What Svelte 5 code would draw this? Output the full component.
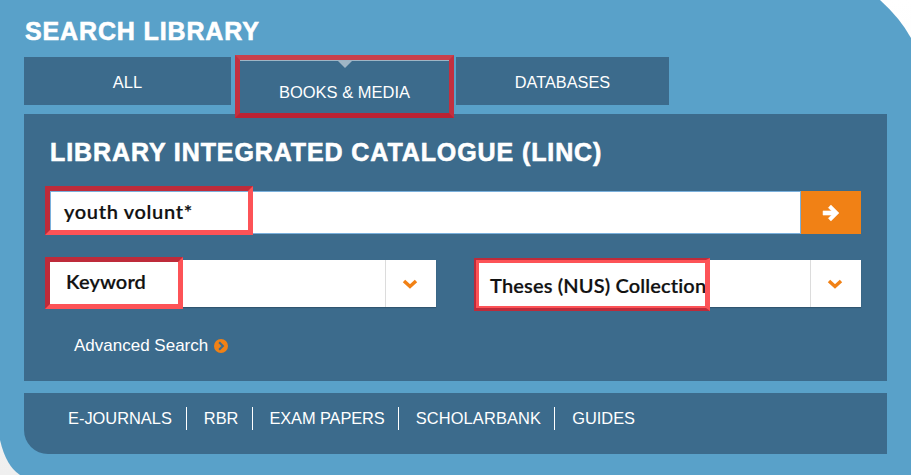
<script>
	const links = ["E-JOURNALS", "RBR", "EXAM PAPERS", "SCHOLARBANK", "GUIDES"];
</script>

<div class="panel">
	<h1>SEARCH LIBRARY</h1>

	<div class="tabs">
		<div class="tab all">ALL</div>
		<div class="tab books">
			<span class="caret"></span>
			BOOKS &amp; MEDIA
			<span class="mark mark-books"></span>
		</div>
		<div class="tab databases">DATABASES</div>
	</div>

	<div class="main">
		<h2>LIBRARY INTEGRATED CATALOGUE (LINC)</h2>

		<div class="search">
			<div class="input">
				youth volunt*
				<span class="mark mark-input"></span>
			</div>
			<div class="go">
				<svg width="18" height="18" viewBox="0 0 17 16">
					<path d="M1 6h8L6 3l2.400-2.600L16 8l-7.600 7.600L6 13l3-3H1z" fill="#fff" stroke="#fff" stroke-width="0.5" stroke-linejoin="round" />
				</svg>
			</div>
		</div>

		<div class="selects">
			<div class="select">
				<span class="value keyword">Keyword</span>
				<span class="arrow">
					<svg width="16" height="10" viewBox="0 0 16 10">
						<path d="M2 2l6 5.500L14 2" fill="none" stroke="#f18115" stroke-width="3.500" />
					</svg>
				</span>
				<span class="mark mark-keyword"></span>
			</div>
			<div class="select">
				<span class="value theses">Theses (NUS) Collection</span>
				<span class="arrow">
					<svg width="16" height="10" viewBox="0 0 16 10">
						<path d="M2 2l6 5.500L14 2" fill="none" stroke="#f18115" stroke-width="3.500" />
					</svg>
				</span>
				<span class="mark mark-theses"></span>
			</div>
		</div>

		<div class="advanced">
			Advanced Search
			<svg width="14" height="14" viewBox="0 0 15 15">
				<circle cx="7.500" cy="7.500" r="7.500" fill="#f18115" />
				<path d="M5.500 3.500l4 4-4 4" fill="none" stroke="#3c6b8c" stroke-width="2.200" />
			</svg>
		</div>
	</div>

	<div class="links">
		{#each links as link}
			<span class="link">{link}</span>
		{/each}
	</div>
</div>

<style>
	:global(body) {
		background: linear-gradient(#ffffff, #efefef);
		height: 475px;
		overflow: hidden;
	}

	.panel {
		box-sizing: border-box;
		width: 911px;
		height: 475px;
		padding: 0 24px;
		background: #59a1c9;
		clip-path: path("M0 0H880Q900 18 911 38V475H20Q6 466 0 440Z");
		font-family: "Liberation Sans", Arial, sans-serif;
		color: #fff;
		overflow: hidden;
	}

	h1 {
		margin: 0;
		padding: 17px 0 0 1px;
		height: 40px;
		box-sizing: content-box;
		font-size: 25px;
		line-height: 28px;
		letter-spacing: 0.860px;
		font-weight: 700;
		-webkit-text-stroke: 0.6px #fff;
	}

	.tabs {
		display: flex;
		height: 48px;
		margin-bottom: 9px;
	}

	.tab {
		position: relative;
		display: flex;
		align-items: center;
		justify-content: center;
		height: 48px;
		background: #3c6b8c;
		font-size: 16.500px;
	}

	.all {
		width: 207px;
		margin-right: 9px;
		padding-top: 2px;
		box-sizing: border-box;
	}

	.books {
		box-sizing: border-box;
		width: 209px;
		height: 55px;
		margin-top: 3px;
		margin-right: 7px;
		padding-top: 9px;
		border-top: 1px solid #9fb5c5;
	}

	.databases {
		width: 213px;
		padding-top: 2px;
		box-sizing: border-box;
		font-size: 16.300px;
	}

	.caret {
		position: absolute;
		top: 0;
		left: 98px;
		width: 0;
		height: 0;
		border-left: 7px solid transparent;
		border-right: 7px solid transparent;
		border-top: 7px solid #9fb5c5;
	}

	.main {
		box-sizing: border-box;
		width: 863px;
		height: 267px;
		padding: 0 26px;
		background: #3c6b8c;
	}

	h2 {
		margin: 0;
		padding-top: 23px;
		height: 54px;
		box-sizing: content-box;
		font-size: 25px;
		line-height: 30px;
		letter-spacing: 0.900px;
		font-weight: 700;
		-webkit-text-stroke: 0.6px #fff;
	}

	.search {
		display: flex;
		height: 43px;
		margin-bottom: 26px;
	}

	.input {
		position: relative;
		flex: 1;
		box-sizing: border-box;
		padding-left: 13px;
		background: #fff;
		border: 1px solid #7ab0dc;
		color: #111;
		font-family: Lato, sans-serif;
		font-weight: 600;
		font-size: 20px;
		letter-spacing: 0.650px;
		line-height: 39px;
		-webkit-text-stroke: 0.2px #111;
	}

	.go {
		display: flex;
		align-items: center;
		justify-content: center;
		width: 60px;
		background: #f18115;
	}

	.selects {
		display: flex;
		justify-content: space-between;
		margin-bottom: 28px;
	}

	.select {
		position: relative;
		display: flex;
		width: 386px;
		height: 47px;
		background: #fff;
		color: #111;
		font-family: Lato, sans-serif;
		font-weight: 600;
		font-size: 20px;
		letter-spacing: 0.150px;
		-webkit-text-stroke: 0.2px #111;
		box-shadow: 0 1px 1px rgba(0, 0, 0, 0.2);
	}

	.value {
		flex: 1;
		line-height: 42px;
		padding-left: 16px;
	}

	.value.theses {
		padding-left: 15px;
		line-height: 50px;
	}

	.arrow {
		display: flex;
		align-items: center;
		justify-content: center;
		box-sizing: border-box;
		width: 51px;
		padding-right: 2px;
		border-left: 1px solid #dcdcdc;
	}

	.advanced {
		display: flex;
		align-items: center;
		gap: 6px;
		padding-left: 24px;
		font-size: 17px;
		line-height: 22px;
	}

	.links {
		display: flex;
		align-items: center;
		box-sizing: border-box;
		width: 863px;
		height: 61px;
		margin-top: 12px;
		padding-left: 44px;
		padding-bottom: 10px;
		background: #3c6b8c;
		border-bottom-left-radius: 24px;
		font-size: 16.400px;
	}

	.link {
		padding: 0 14px 0 17px;
		line-height: 23px;
		border-right: 1px solid #fff;
	}

	.link:first-child {
		padding-left: 0;
	}

	.link:nth-child(3) {
		padding-left: 16px;
		padding-right: 13px;
		letter-spacing: -0.100px;
	}

	.link:nth-child(4) {
		padding-right: 13px;
		letter-spacing: 0.150px;
	}

	.link:last-child {
		border-right: none;
	}

	/* red highlight boxes drawn over the screenshot */
	.mark {
		position: absolute;
		box-sizing: border-box;
		pointer-events: none;
		border: 5px solid #c02a3a;
	}

	.mark-books {
		left: -5px;
		top: -6px;
		width: 219px;
		height: 63px;
		border-color: #c8404c #c23040 #bb2233 #c23040;
	}

	.mark-input {
		left: -6px;
		top: -6px;
		width: 208px;
		height: 49px;
		border-color: #be2b3a #fd5357 #fd5357 #be2b3a;
		-webkit-text-stroke: 0;
	}

	.mark-keyword {
		left: -5px;
		top: -3px;
		width: 138px;
		height: 52px;
		border-color: #be2b3a #fd5357 #fd5357 #be2b3a;
	}

	.mark-theses {
		left: -1px;
		top: -2px;
		width: 236px;
		height: 53px;
		border-width: 2px 4px 3px 2px;
		border-color: #be2b3a #fd5357 #be2b3a #be2b3a;
		box-shadow: inset 3px 3px 0 #fd5357, inset -1px -2px 0 #fd5357;
	}
</style>
